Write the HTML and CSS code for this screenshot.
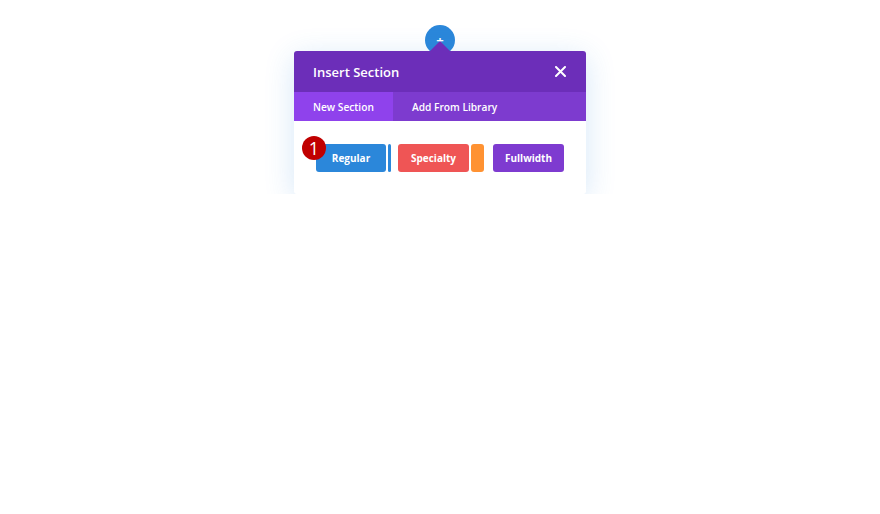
FILE: index.html
```html
<!DOCTYPE html>
<html lang="en">
<head>
  <meta charset="UTF-8">
  <title>Insert Section</title>
  <link rel="stylesheet" href="styles.css">
</head>
<body>

<div class="page">
  <button class="add-button">+</button>

  <div class="modal">
    <header>
      <h2>Insert Section</h2>
      <button class="close-button" aria-label="Close">
        <svg width="11" height="11" viewBox="0 0 11 11">
          <path d="M1 1 L10 10 M10 1 L1 10" stroke="#fff" stroke-width="2" stroke-linecap="round"/>
        </svg>
      </button>
    </header>

    <nav class="tabs">
      <span class="tab active">New Section</span>
      <span class="tab">Add From Library</span>
    </nav>

    <div class="modal-body">
      <div class="option">
        <span class="badge">1</span>
        <button class="btn regular">Regular</button>
        <span class="strip strip-blue"></span>
      </div>
      <div class="option">
        <button class="btn specialty">Specialty</button>
        <span class="strip strip-orange"></span>
      </div>
      <div class="option">
        <button class="btn fullwidth">Fullwidth</button>
      </div>
    </div>
  </div>
</div>

</body>
</html>
```

FILE: styles.css
```css
body {
  margin: 0;
  font-family: "Open Sans", Arial, sans-serif;
  background-color: #fff;
}

.page {
  padding-top: 25px;
  display: flex;
  flex-direction: column;
  align-items: center;
}

.add-button {
  width: 30px;
  height: 30px;
  border-radius: 50%;
  border: none;
  background-color: #2b87da;
  color: #fff;
  font-family: "Open Sans", Arial, sans-serif;
  font-size: 13px;
  font-weight: 700;
  line-height: 28px;
  padding: 0;
}

.modal {
  position: relative;
  width: 292px;
  margin-top: -4px;
  background-color: #fff;
  border-radius: 3px;
  box-shadow: 0 6px 30px rgba(43, 135, 218, 0.2);
}

.modal::before {
  content: "";
  position: absolute;
  top: -10px;
  left: 50%;
  margin-left: -10px;
  border-left: 10px solid transparent;
  border-right: 10px solid transparent;
  border-bottom: 10px solid #6c2eb9;
}

.modal header {
  height: 41px;
  padding: 0 19px;
  background-color: #6c2eb9;
  border-radius: 3px 3px 0 0;
  display: flex;
  align-items: center;
  justify-content: space-between;
}

.modal header h2 {
  margin: 0;
  color: #fff;
  font-size: 13px;
  font-weight: 600;
}

.close-button {
  background: transparent;
  border: none;
  padding: 0;
  margin-right: 1px;
  display: flex;
}

.tabs {
  display: flex;
  height: 29px;
  background-color: #7d3bcf;
}

.tab {
  padding: 0 19px;
  display: flex;
  align-items: center;
  color: #fff;
  font-size: 10.2px;
  font-weight: 600;
}

.tab.active {
  background-color: #8f42ec;
}

.modal-body {
  display: flex;
  gap: 7px;
  padding: 23px 22px 22px;
}

.option {
  position: relative;
  display: flex;
  gap: 2px;
}

.option + .option + .option {
  margin-left: 2px;
}

.btn {
  height: 28px;
  width: 71px;
  border: none;
  border-radius: 3px;
  color: #fff;
  font-family: "Open Sans", Arial, sans-serif;
  font-size: 10px;
  font-weight: 700;
  padding: 0;
}

.regular {
  width: 70px;
  background-color: #2b87da;
}

.specialty {
  background-color: #ef5555;
}

.fullwidth {
  background-color: #7e3bd0;
}

.strip {
  height: 28px;
  border-radius: 3px;
}

.strip-blue {
  width: 3px;
  background-color: #2b87da;
}

.strip-orange {
  width: 13px;
  background-color: #ff9232;
}

.badge {
  position: absolute;
  top: -8px;
  left: -14px;
  width: 24px;
  height: 24px;
  border-radius: 50%;
  background-color: #c00000;
  color: #fff;
  font-size: 18px;
  line-height: 24px;
  text-align: center;
}
```
